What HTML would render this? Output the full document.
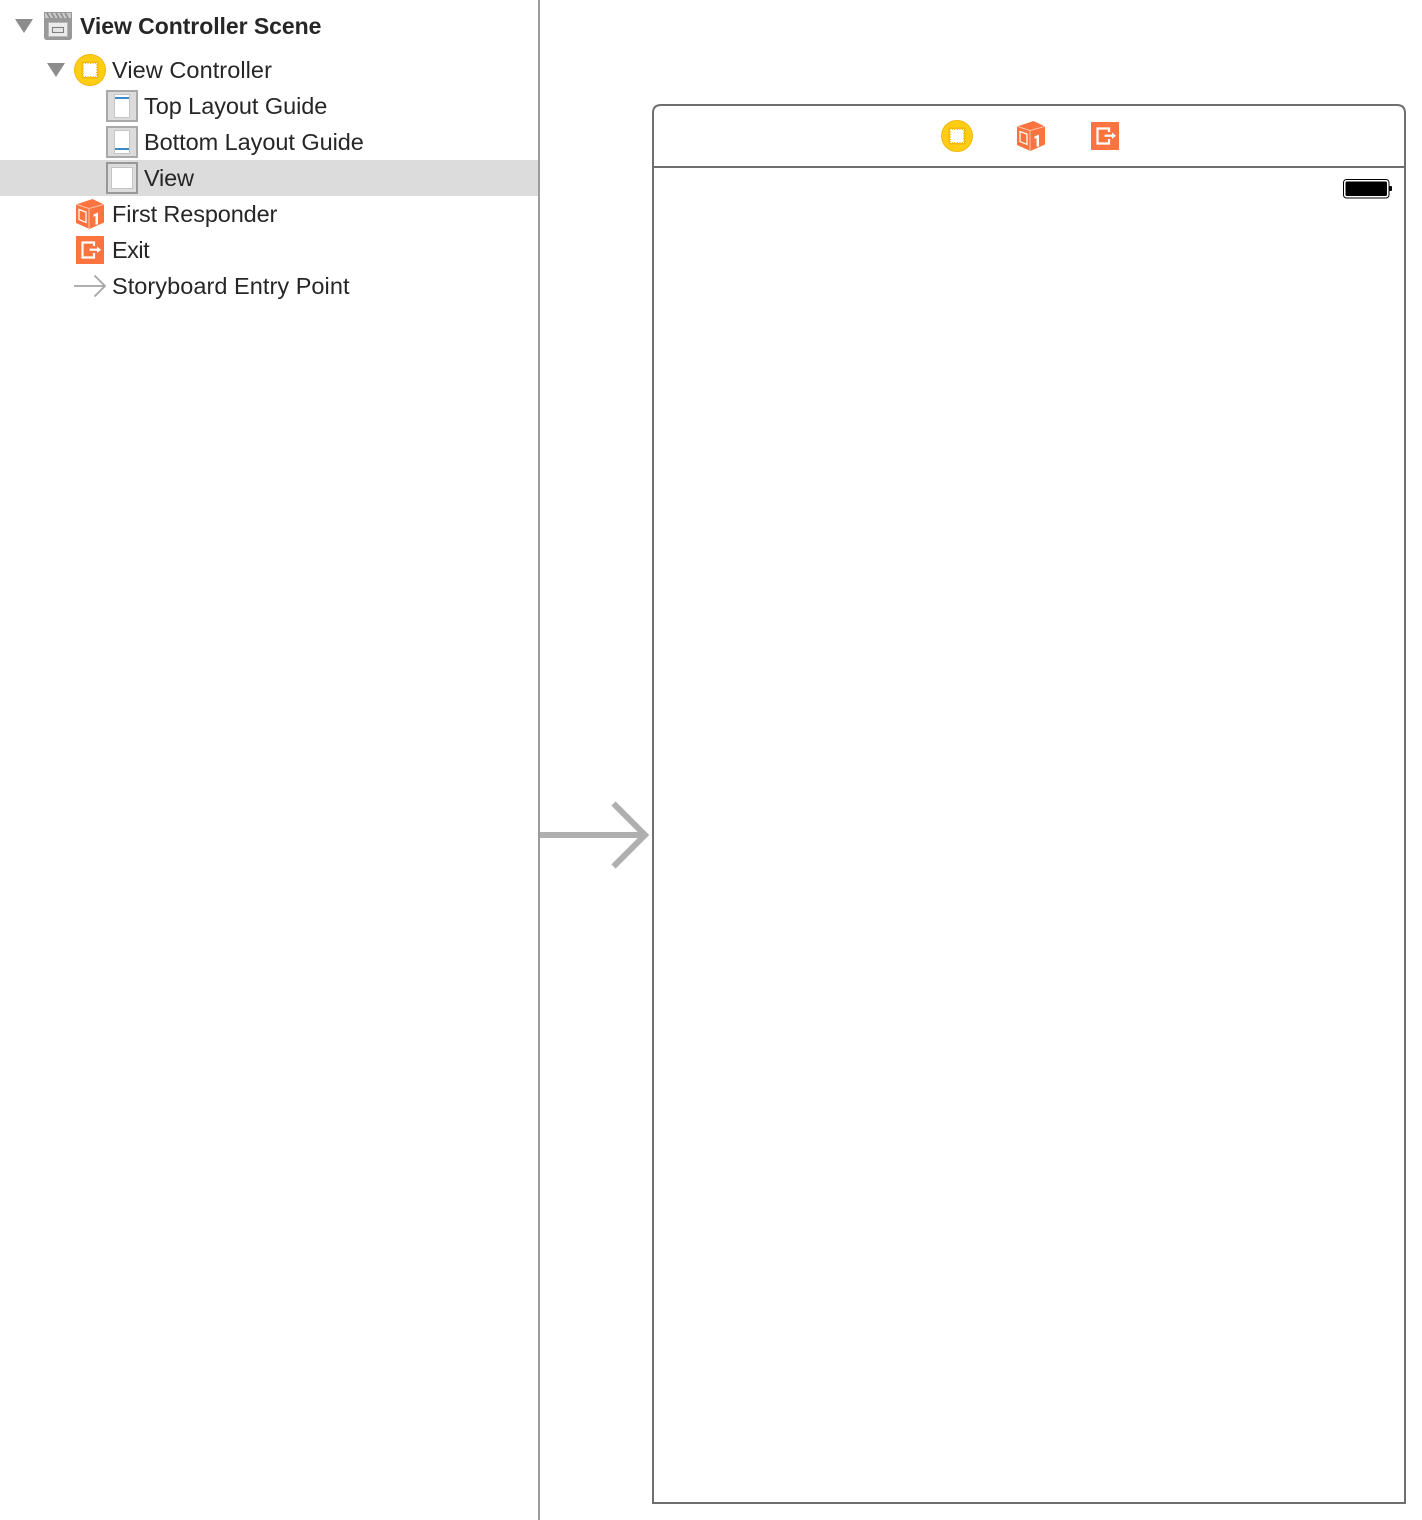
<!DOCTYPE html>
<html>
<head>
<meta charset="utf-8">
<style>
html,body{margin:0;padding:0;background:#fff}
body{position:relative;width:1422px;height:1520px;overflow:hidden;font-family:"Liberation Sans",Arial,sans-serif}
.t{position:absolute;font-size:23.5px;line-height:36px;height:36px;color:#262626;white-space:nowrap}
.b{font-weight:bold;font-size:23px;letter-spacing:-.05px}
svg.full{position:absolute;left:0;top:0}
</style>
</head>
<body>
<svg class="full" width="1422" height="1520" viewBox="0 0 1422 1520" xmlns="http://www.w3.org/2000/svg">
<defs>
<g id="vc">
<circle cx="16" cy="16" r="15.500" fill="#ffcd14" stroke="#f2b90f"/>
<rect x="7.500" y="7.500" width="17" height="17" fill="#f3b90e"/>
<rect x="10" y="10" width="12" height="12" fill="#fff"/>
<rect x="9.500" y="9.500" width="13" height="13" fill="none" stroke="#fff" stroke-width="1" stroke-dasharray="1.500 1"/>
</g>
<g id="cube">
<path d="M0.500 5.500 17 0 28.500 5.500V23.500L14 30 0.500 24Z" fill="#fb7440"/>
<path d="M1 5.500 13.500 9.500 28 5.500M13.500 9.500V29.500" fill="none" stroke="#ffc4aa" stroke-width="1"/>
<path d="M3.500 10.500 10.500 13V23.500L3.500 20.500Z" fill="none" stroke="#fff" stroke-width="1.200"/>
<path d="M18 15.500 22.500 13.500V25.500H20V17L18 17.800Z" fill="#fff"/>
</g>
<g id="exit">
<rect width="28" height="28" fill="#fb7440"/>
<path d="M18 10V6.500H6.500V21.500H18V17" fill="none" stroke="#fff" stroke-width="2.200"/>
<path d="M13.500 13.700H22" stroke="#fff" stroke-width="2.200"/>
<path d="M21 10.500 25 13.700 21 17Z" fill="#fff"/>
</g>
</defs>

<!-- selection row -->
<rect x="0" y="160" width="538" height="36" fill="#dcdcdc"/>
<!-- divider -->
<rect x="538" y="0" width="2" height="1520" fill="#9b9b9b"/>

<!-- disclosure triangles -->
<path d="M15 19H33L24 33Z" fill="#8c8c8c"/>
<path d="M47 63H65L56 77Z" fill="#8c8c8c"/>

<!-- scene icon -->
<g transform="translate(44,12)">
<path d="M0 0H28V25Q28 28 25 28H3Q0 28 0 25Z" fill="#999"/>
<rect x="1" y="1" width="26" height="5" fill="#c8c8c8"/>
<path d="M3 1 6 6M7.500 1 10.500 6M12 1 15 6M16.500 1 19.500 6M21 1 24 6" stroke="#888" stroke-width="1.500"/>
<rect x="4.500" y="10.500" width="19" height="14" fill="#ececec" stroke="#b5b5b5"/>
<rect x="8.500" y="15.500" width="11" height="5" fill="#e6e6e6" stroke="#808080" stroke-width="1.100"/>
</g>

<!-- view controller -->
<use href="#vc" x="74" y="54"/>

<!-- top layout guide -->
<rect x="107" y="91" width="30" height="30" fill="#dcdcdc" stroke="#a9a9a9" stroke-width="2"/>
<rect x="114.500" y="94.500" width="15" height="23" fill="#fff" stroke="#c4c4c4"/>
<rect x="115" y="97" width="14" height="2" fill="#3c8bc8"/>

<!-- bottom layout guide -->
<rect x="107" y="127" width="30" height="30" fill="#dcdcdc" stroke="#a9a9a9" stroke-width="2"/>
<rect x="114.500" y="130.500" width="15" height="23" fill="#fff" stroke="#c4c4c4"/>
<rect x="115" y="148" width="14" height="2" fill="#3c8bc8"/>

<!-- view -->
<rect x="107" y="163" width="30" height="30" fill="#dcdcdc" stroke="#989898" stroke-width="2"/>
<rect x="111.500" y="167.500" width="21" height="21" fill="#fff" stroke="#c4c4c4"/>

<!-- first responder / exit -->
<use href="#cube" x="75.500" y="199"/>
<use href="#exit" x="76" y="236"/>

<!-- entry point arrow -->
<path d="M74 286H104M94.500 275.500 105 286 94.500 296.500" fill="none" stroke="#a5a5a5" stroke-width="1.800"/>

<!-- big arrow -->
<path d="M540 835H644" stroke="#afafaf" stroke-width="6" fill="none"/>
<path d="M613.500 803.500 645 835 613.500 866.500" stroke="#afafaf" stroke-width="6" fill="none"/>

<!-- scene card -->
<path d="M653 1503V113Q653 105 661 105H1397Q1405 105 1405 113V1503Z" fill="none" stroke="#6f6f6f" stroke-width="2"/>
<rect x="653" y="166" width="752" height="2" fill="#6f6f6f"/>

<!-- dock icons -->
<use href="#vc" x="941" y="120"/>
<use href="#cube" x="1016.500" y="121"/>
<use href="#exit" x="1091" y="122"/>

<!-- battery -->
<rect x="1343.500" y="179.500" width="45.500" height="18.500" rx="3" fill="#fff" stroke="#000" stroke-width="1"/>
<rect x="1345.500" y="181.500" width="41.500" height="14.500" rx="1.500" fill="#000"/>
<path d="M1389.500 186H1391Q1392 186 1392 187V190Q1392 191 1391 191H1389.500Z" fill="#000"/>
</svg>

<div class="t b" style="left:80px;top:8px">View Controller Scene</div>
<div class="t" style="left:112px;top:52px;letter-spacing:.07px">View Controller</div>
<div class="t" style="left:144px;top:88px;letter-spacing:-.06px">Top Layout Guide</div>
<div class="t" style="left:144px;top:124px;letter-spacing:-.05px">Bottom Layout Guide</div>
<div class="t" style="left:144px;top:160px;letter-spacing:-.2px">View</div>
<div class="t" style="left:112px;top:196px;letter-spacing:-.13px">First Responder</div>
<div class="t" style="left:112px;top:232px;letter-spacing:-.5px">Exit</div>
<div class="t" style="left:112px;top:268px;letter-spacing:.05px">Storyboard Entry Point</div>
</body>
</html>
